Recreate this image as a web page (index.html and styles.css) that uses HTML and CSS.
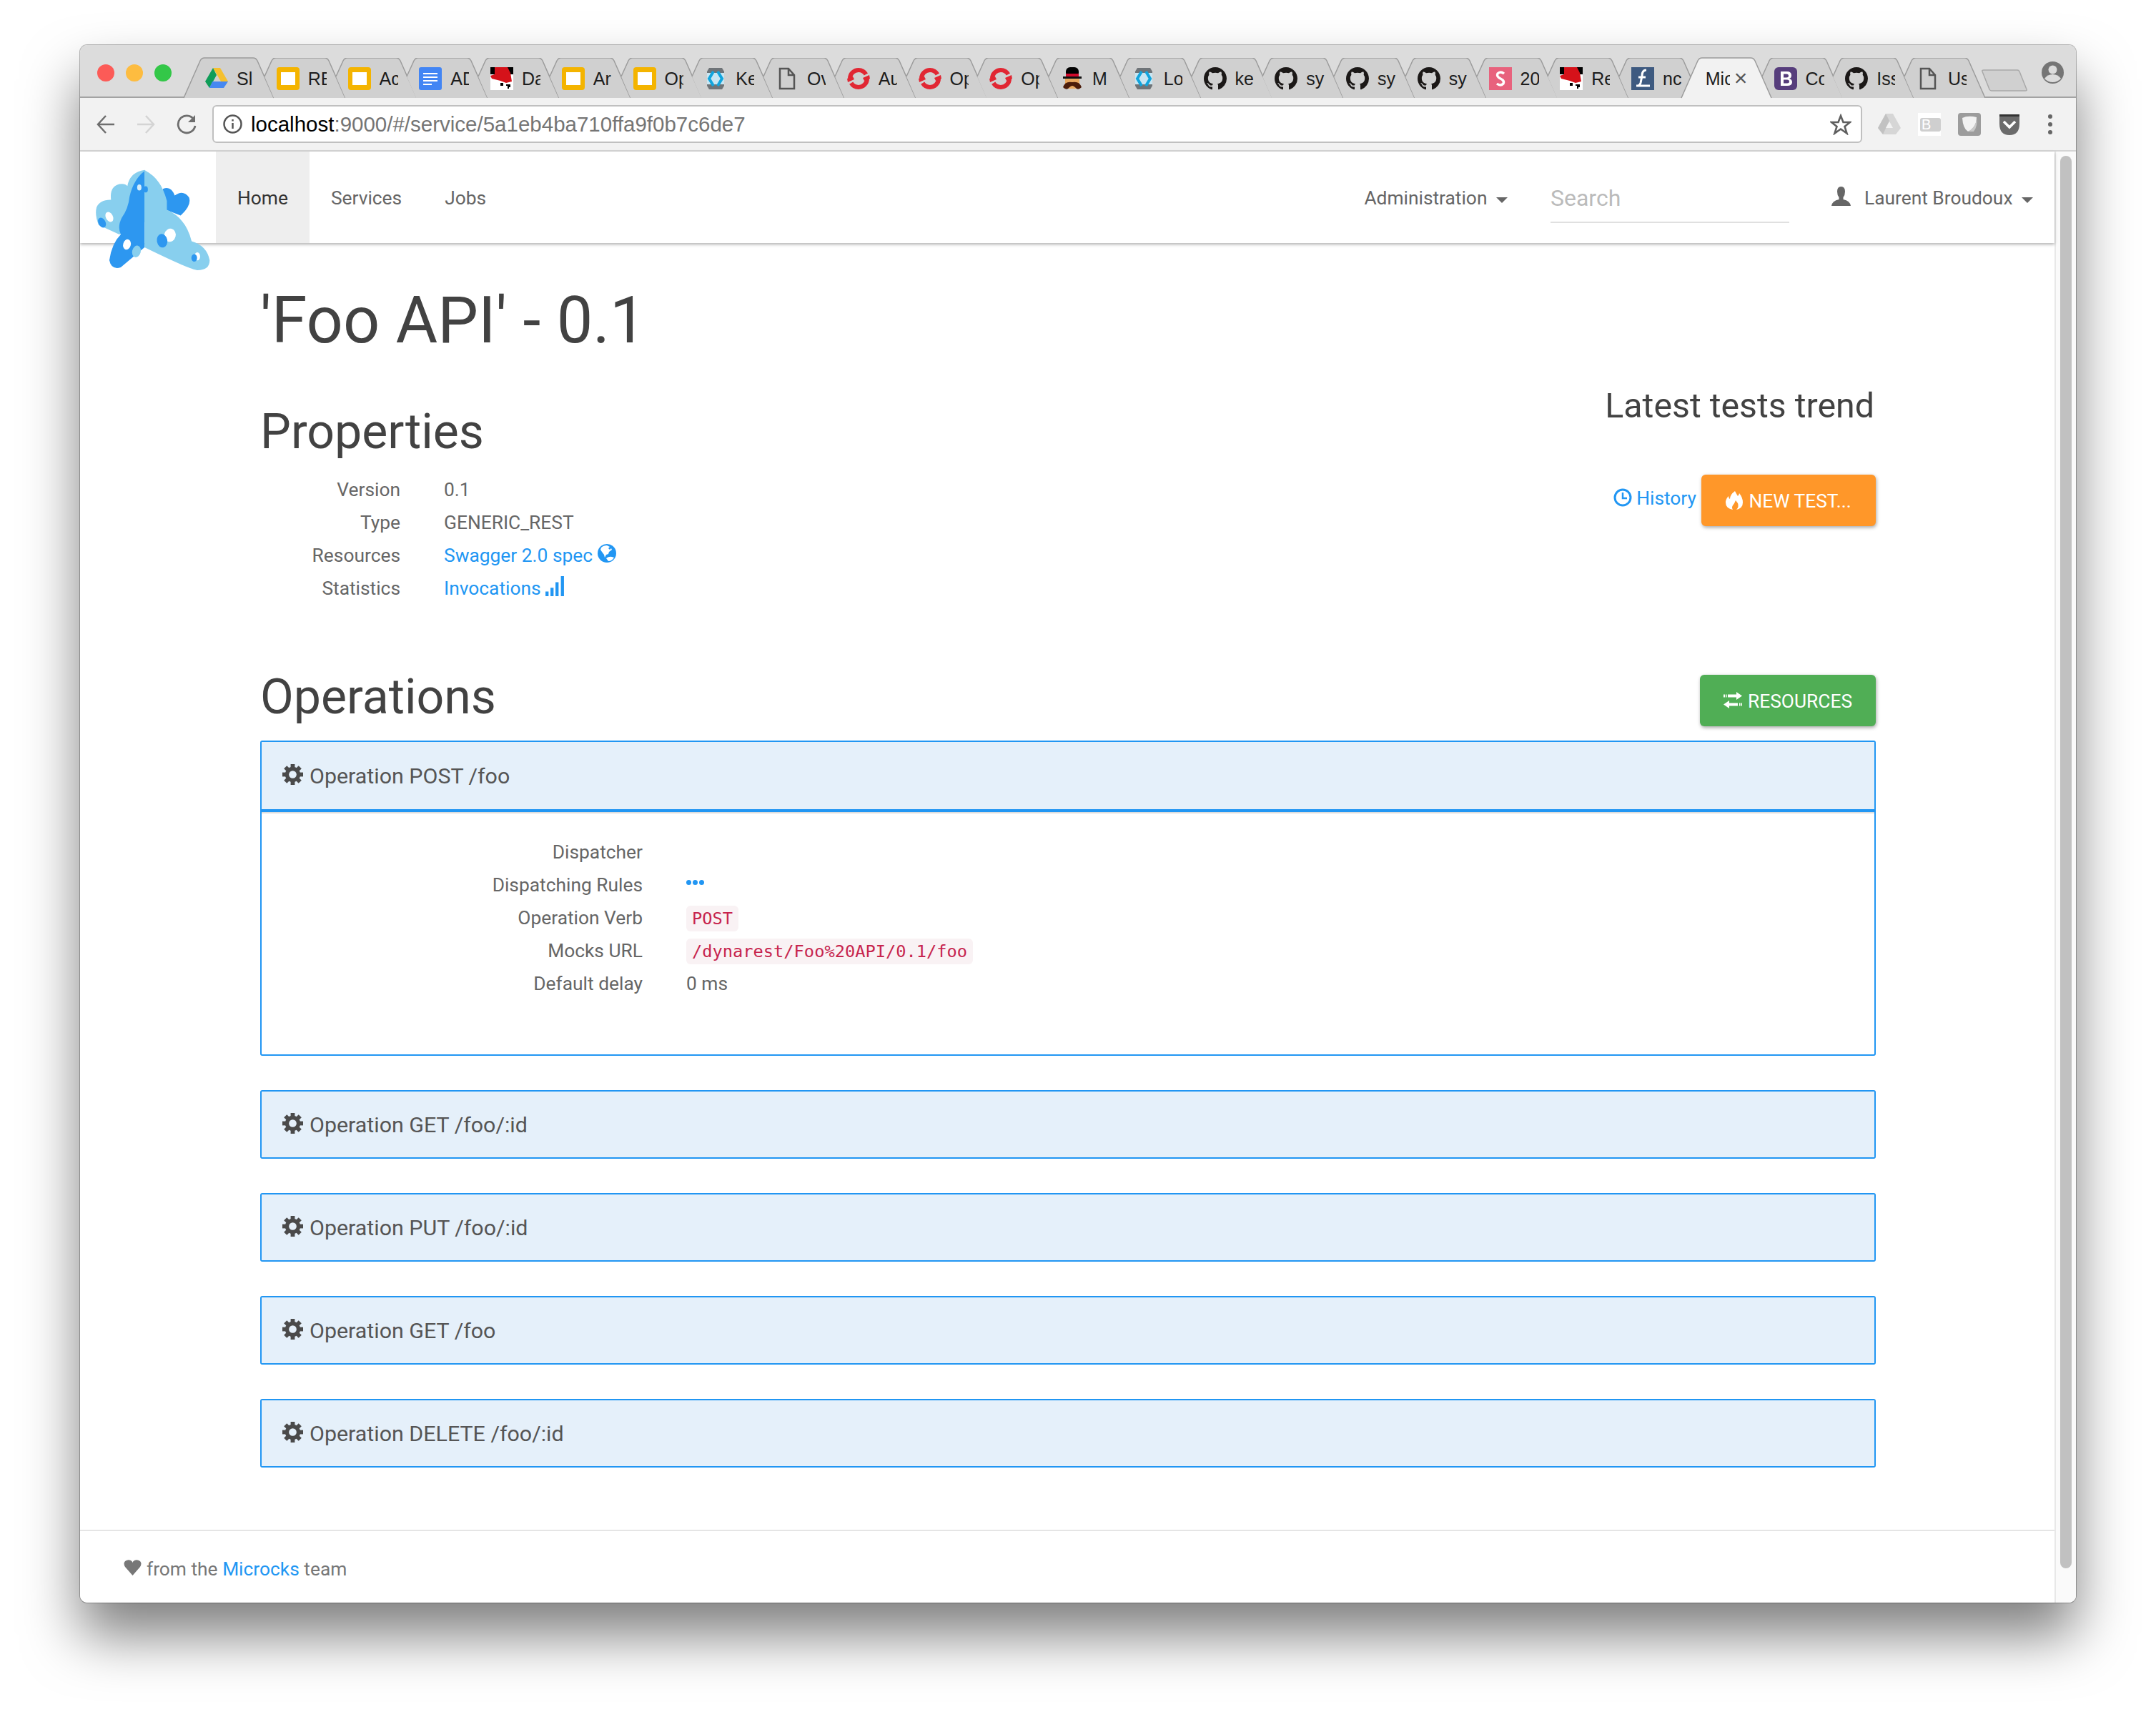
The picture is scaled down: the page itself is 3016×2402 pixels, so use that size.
FILE: index.html
```html
<!DOCTYPE html>
<html lang="en">
<head>
  <meta charset="UTF-8" />
  <title>Microcks</title>
  <link rel="stylesheet" href="styles.css">
</head>
<body>
  <!-- shared icons -->
  <svg class="defs" width="0" height="0">
    <symbol id="tab-shape" viewBox="0 0 126 56" preserveAspectRatio="none">
      <path class="tab-fill" d="M13 26 L23 4 Q25 0 29 0 H97 Q101 0 103 4 L126 56 H26 Z"/>
      <path class="tab-line" d="M13 26 L23 4 Q25 0 29 0 H97 Q101 0 103 4 L126 56"/>
    </symbol>
    <symbol id="fav-drive" viewBox="0 0 32 32">
      <path fill="#f5c02e" d="M11 1 H21 L32 20 H22 Z"/>
      <path fill="#0f9d58" d="M11 1 L16 11 L6 29 L0 20 Z"/>
      <path fill="#4688f1" d="M10 20 H32 L26 29 H6 Z"/>
    </symbol>
    <symbol id="fav-slides" viewBox="0 0 32 32">
      <rect x="0" y="0" width="32" height="32" rx="4" fill="#f4b400"/>
      <rect x="6" y="7" width="20" height="18" fill="#fff"/>
    </symbol>
    <symbol id="fav-docs" viewBox="0 0 32 32">
      <rect x="0" y="0" width="32" height="32" rx="3" fill="#4285f4"/>
      <path stroke="#fff" stroke-width="2" d="M6 9 H26 M6 14 H26 M6 19 H26 M6 24 H18"/>
    </symbol>
    <symbol id="fav-redhat" viewBox="0 0 32 32">
      <rect width="32" height="32" fill="#fff"/>
      <rect width="32" height="10" fill="#000"/>
      <path fill="#d5121a" d="M6 0 H24 L28 8 L30 20 L22 22 L14 19 L2 16 L0 12 L6 10 Z"/>
      <path fill="#000" d="M14 22 H18 V26 H14 Z M22 24 H28 V28 H26 V30 H24 V26 H22 Z"/>
    </symbol>
    <symbol id="fav-keycloak" viewBox="0 0 32 32">
      <path fill="#6f7478" d="M7 1 H25 L28 6 V26 L25 31 H7 L4 26 V6 Z"/>
      <path fill="#c9e6f2" d="M4 8 H28 V24 H4 Z"/>
      <path fill="none" stroke="#12a5dd" stroke-width="4" d="M13 6 L7 16 L13 26 M19 6 L25 16 L19 26"/>
    </symbol>
    <symbol id="fav-file" viewBox="0 0 32 32">
      <path fill="none" stroke="#555" stroke-width="2.500" d="M6 2 H18 L26 11 V30 H6 Z M18 2 V11 H26"/>
    </symbol>
    <symbol id="fav-openshift" viewBox="0 0 32 32">
      <circle cx="16" cy="16" r="12" fill="none" stroke="#e12733" stroke-width="6" stroke-dasharray="31 6.700"/>
      <path fill="#e12733" d="M1 21 L10 17 L8 13 L0 16 Z M31 11 L22 15 L24 19 L32 16 Z"/>
    </symbol>
    <symbol id="fav-hatman" viewBox="0 0 32 32">
      <rect x="7" y="0" width="18" height="14" rx="6" fill="#000"/>
      <rect x="7" y="9" width="18" height="5" fill="#d00a2b"/>
      <rect x="3" y="13" width="26" height="3" fill="#111"/>
      <rect x="6" y="16" width="20" height="14" fill="#e8a860"/>
      <path fill="#4b1c0a" d="M3 28 Q6 19 16 21 Q26 19 29 28 Q25 32 22 30 Q18 26 16 26 Q14 26 10 30 Q7 32 3 28 Z"/>
    </symbol>
    <symbol id="fav-github" viewBox="0 0 16 16">
      <path fill="#1b1817" d="M8 0C3.58 0 0 3.58 0 8c0 3.54 2.29 6.53 5.47 7.59.4.07.55-.17.55-.38 0-.19-.01-.82-.01-1.49-2.01.37-2.53-.49-2.69-.94-.09-.23-.48-.94-.82-1.13-.28-.15-.68-.52-.01-.53.63-.01 1.08.58 1.23.82.72 1.21 1.87.87 2.33.66.07-.52.28-.87.51-1.07-1.78-.2-3.64-.89-3.64-3.95 0-.87.31-1.59.82-2.15-.08-.2-.36-1.02.08-2.12 0 0 .67-.21 2.2.82.64-.18 1.32-.27 2-.27.68 0 1.36.09 2 .27 1.53-1.04 2.2-.82 2.2-.82.44 1.1.16 1.92.08 2.12.51.56.82 1.27.82 2.15 0 3.07-1.87 3.75-3.65 3.95.29.25.54.73.54 1.48 0 1.07-.01 1.93-.01 2.2 0 .21.15.46.55.38A8.013 8.013 0 0016 8c0-4.42-3.58-8-8-8z"/>
    </symbol>
    <symbol id="fav-pink" viewBox="0 0 32 32">
      <rect width="32" height="32" fill="#e8627d"/>
      <path fill="none" stroke="#fff" stroke-width="3.500" d="M21 9 Q16 5 12 9 Q10 13 16 16 Q22 19 20 23 Q16 27 11 23"/>
    </symbol>
    <symbol id="fav-ltx" viewBox="0 0 32 32">
      <rect width="32" height="32" fill="#3e5a80"/>
      <path fill="none" stroke="#fff" stroke-width="3" d="M21 4 Q15 4 15 12 L13 22 Q12 26 7 26 H26 M10 14 H20"/>
    </symbol>
    <symbol id="fav-bootstrap" viewBox="0 0 32 32">
      <rect width="32" height="32" rx="6" fill="#563d7c"/>
      <path fill="#fff" fill-rule="evenodd" d="M9 6 H18 Q24 6 24 11.500 Q24 15 21 16 Q25 17 25 21 Q25 26 18 26 H9 Z M13 9.500 V14.500 H17 Q20 14.500 20 12 Q20 9.500 17 9.500 Z M13 17.500 V22.500 H18 Q21 22.500 21 20 Q21 17.500 18 17.500 Z"/>
    </symbol>
    <symbol id="ic-cog" viewBox="0 0 30 30">
      <circle cx="15" cy="15" r="11"/>
      <rect x="12" y="0" width="6" height="7"/>
      <rect x="12" y="0" width="6" height="7" transform="rotate(45 15 15)"/>
      <rect x="12" y="0" width="6" height="7" transform="rotate(90 15 15)"/>
      <rect x="12" y="0" width="6" height="7" transform="rotate(135 15 15)"/>
      <rect x="12" y="0" width="6" height="7" transform="rotate(180 15 15)"/>
      <rect x="12" y="0" width="6" height="7" transform="rotate(225 15 15)"/>
      <rect x="12" y="0" width="6" height="7" transform="rotate(270 15 15)"/>
      <rect x="12" y="0" width="6" height="7" transform="rotate(315 15 15)"/>
      <circle cx="15" cy="15" r="5.500" fill="#e5f0fa"/>
    </symbol>
  </svg>

  <div class="window">
    <div class="tabstrip">
      <div class="lights">
        <span class="light light-red"></span>
        <span class="light light-yellow"></span>
        <span class="light light-green"></span>
      </div>
      <div class="tabs">
        <div class="tab tab-first"><svg class="tab-bg" viewBox="0 0 126 56" preserveAspectRatio="none"><path class="tab-fill" d="M0 56 L23 4 Q25 0 29 0 H97 Q101 0 103 4 L126 56 Z"/><path class="tab-line" d="M0 56 L23 4 Q25 0 29 0 H97 Q101 0 103 4 L126 56"/></svg><svg class="fav"><use href="#fav-drive"/></svg><span class="tab-title">Sl</span></div>
        <div class="tab"><svg class="tab-bg"><use href="#tab-shape"/></svg><svg class="fav"><use href="#fav-slides"/></svg><span class="tab-title">RE</span></div>
        <div class="tab"><svg class="tab-bg"><use href="#tab-shape"/></svg><svg class="fav"><use href="#fav-slides"/></svg><span class="tab-title">Ac</span></div>
        <div class="tab"><svg class="tab-bg"><use href="#tab-shape"/></svg><svg class="fav"><use href="#fav-docs"/></svg><span class="tab-title">AD</span></div>
        <div class="tab"><svg class="tab-bg"><use href="#tab-shape"/></svg><svg class="fav"><use href="#fav-redhat"/></svg><span class="tab-title">Da</span></div>
        <div class="tab"><svg class="tab-bg"><use href="#tab-shape"/></svg><svg class="fav"><use href="#fav-slides"/></svg><span class="tab-title">Ar</span></div>
        <div class="tab"><svg class="tab-bg"><use href="#tab-shape"/></svg><svg class="fav"><use href="#fav-slides"/></svg><span class="tab-title">Op</span></div>
        <div class="tab"><svg class="tab-bg"><use href="#tab-shape"/></svg><svg class="fav"><use href="#fav-keycloak"/></svg><span class="tab-title">Ke</span></div>
        <div class="tab"><svg class="tab-bg"><use href="#tab-shape"/></svg><svg class="fav"><use href="#fav-file"/></svg><span class="tab-title">Ov</span></div>
        <div class="tab"><svg class="tab-bg"><use href="#tab-shape"/></svg><svg class="fav"><use href="#fav-openshift"/></svg><span class="tab-title">Au</span></div>
        <div class="tab"><svg class="tab-bg"><use href="#tab-shape"/></svg><svg class="fav"><use href="#fav-openshift"/></svg><span class="tab-title">Op</span></div>
        <div class="tab"><svg class="tab-bg"><use href="#tab-shape"/></svg><svg class="fav"><use href="#fav-openshift"/></svg><span class="tab-title">Op</span></div>
        <div class="tab"><svg class="tab-bg"><use href="#tab-shape"/></svg><svg class="fav"><use href="#fav-hatman"/></svg><span class="tab-title">M</span></div>
        <div class="tab"><svg class="tab-bg"><use href="#tab-shape"/></svg><svg class="fav"><use href="#fav-keycloak"/></svg><span class="tab-title">Lo</span></div>
        <div class="tab"><svg class="tab-bg"><use href="#tab-shape"/></svg><svg class="fav"><use href="#fav-github"/></svg><span class="tab-title">ke</span></div>
        <div class="tab"><svg class="tab-bg"><use href="#tab-shape"/></svg><svg class="fav"><use href="#fav-github"/></svg><span class="tab-title">sy</span></div>
        <div class="tab"><svg class="tab-bg"><use href="#tab-shape"/></svg><svg class="fav"><use href="#fav-github"/></svg><span class="tab-title">sy</span></div>
        <div class="tab"><svg class="tab-bg"><use href="#tab-shape"/></svg><svg class="fav"><use href="#fav-github"/></svg><span class="tab-title">sy</span></div>
        <div class="tab"><svg class="tab-bg"><use href="#tab-shape"/></svg><svg class="fav"><use href="#fav-pink"/></svg><span class="tab-title">20</span></div>
        <div class="tab"><svg class="tab-bg"><use href="#tab-shape"/></svg><svg class="fav"><use href="#fav-redhat"/></svg><span class="tab-title">Re</span></div>
        <div class="tab"><svg class="tab-bg"><use href="#tab-shape"/></svg><svg class="fav"><use href="#fav-ltx"/></svg><span class="tab-title">nc</span></div>
        <div class="tab tab-active"><svg class="tab-bg" viewBox="0 0 126 56" preserveAspectRatio="none"><path class="tab-fill" d="M0 56 L23 4 Q25 0 29 0 H97 Q101 0 103 4 L126 56 Z"/><path class="tab-line" d="M0 56 L23 4 Q25 0 29 0 H97 Q101 0 103 4 L126 56"/></svg><span class="tab-title">Mic</span><span class="tab-close">×</span></div>
        <div class="tab"><svg class="tab-bg"><use href="#tab-shape"/></svg><svg class="fav"><use href="#fav-bootstrap"/></svg><span class="tab-title">Co</span></div>
        <div class="tab"><svg class="tab-bg"><use href="#tab-shape"/></svg><svg class="fav"><use href="#fav-github"/></svg><span class="tab-title">Iss</span></div>
        <div class="tab"><svg class="tab-bg"><use href="#tab-shape"/></svg><svg class="fav"><use href="#fav-file"/></svg><span class="tab-title">Us</span></div>
      </div>
      <svg class="newtab" viewBox="0 0 64 31"><path d="M3 1 H50 Q52 1 53 3 L63 28 Q64 30 61 30 H14 Q12 30 11 28 L1 3 Q0 1 3 1 Z"/></svg>
      <svg class="profile" viewBox="0 0 31 31">
        <circle cx="15.500" cy="15.500" r="15.500" fill="#757575"/>
        <circle cx="15.500" cy="11.500" r="6" fill="#dcdcdc"/>
        <path fill="#dcdcdc" d="M4 24 Q8 18 15.500 18 Q23 18 27 24 Q22 29 15.500 29 Q9 29 4 24 Z"/>
      </svg>
    </div>

    <div class="toolbar">
      <svg class="tool-icon" viewBox="0 0 26 26"><path fill="none" stroke="#6e6e6e" stroke-width="2.500" d="M25 13 H2 M13 1 L2 13 L13 25"/></svg>
      <svg class="tool-icon" viewBox="0 0 26 26"><path fill="none" stroke="#d4d4d4" stroke-width="2.500" d="M1 13 H24 M13 1 L24 13 L13 25"/></svg>
      <svg class="tool-icon tool-reload" viewBox="0 0 28 28"><path fill="none" stroke="#6e6e6e" stroke-width="2.800" d="M24 7 A12 12 0 1 0 26 16"/><path fill="#6e6e6e" d="M26 1 V11 H16 Z"/></svg>
      <div class="addressbar">
        <svg class="info-icon" viewBox="0 0 27 27"><circle cx="13.500" cy="13.500" r="12" fill="none" stroke="#555" stroke-width="2.500"/><path stroke="#555" stroke-width="2.500" d="M13.500 12 V20 M13.500 7 V9.500"/></svg>
        <span class="url"><span class="url-host">localhost</span>:9000/#/service/5a1eb4ba710ffa9f0b7c6de7</span>
        <svg class="star" viewBox="0 0 30 30"><path fill="none" stroke="#5f5f5f" stroke-width="2.600" d="M15 3 L18.500 12 H28 L20.500 18 L23.500 27.500 L15 21.500 L6.500 27.500 L9.500 18 L2 12 H11.500 Z"/></svg>
      </div>
      <div class="extensions">
        <svg class="ext" viewBox="0 0 32 32"><path fill="#d6d6d6" d="M11 1 H21 L32 21 L25 30 H7 L0 21 Z"/><path fill="#c2c2c2" d="M11 1 L16 11 L7 30 L0 21 Z"/><path fill="#f2f2f2" d="M16 12 L21 21 H11 Z"/></svg>
        <svg class="ext" viewBox="0 0 32 32"><rect width="32" height="32" fill="#fff"/><rect x="3" y="7" width="29" height="19" rx="3" fill="#cfcfcf"/><text class="ext-b" x="5" y="23">B</text></svg>
        <svg class="ext" viewBox="0 0 32 32"><rect width="32" height="32" rx="4" fill="#9c9c9c"/><path fill="#f2f2f2" d="M6 7 Q14 3 26 6 Q26 20 14 26 Q7 22 6 7 Z"/><path fill="#c8c8c8" d="M26 6 Q26 20 14 26 L22 26 Q28 18 26 6 Z"/></svg>
        <svg class="ext" viewBox="0 0 32 32"><path fill="#6b6b6b" d="M2 2 H30 V15 Q30 31 16 31 Q2 31 2 15 Z"/><path fill="#333" d="M2 2 H30 V5 H2 Z"/><path fill="none" stroke="#fff" stroke-width="3.500" d="M8 12 L16 20 L24 12"/></svg>
      </div>
      <div class="menu-dots"><span></span><span></span><span></span></div>
    </div>

    <div class="viewport">
      <div class="page">
        <div class="navbar">
          <div class="brand">
            <svg class="logo" viewBox="70 105 484 430">
              <path fill="#88cfee" d="M172 382 L85 342 Q68 300 76 268 Q90 235 137 236 Q130 180 172 170 Q195 165 206 178 Q215 120 278 110 L300 125 L280 330 Z"/>
              <path fill="#2d97f0" d="M355 190 Q390 175 405 218 Q440 192 465 225 Q478 258 430 302 L360 275 Z"/>
              <path fill="#2d97f0" d="M278 115 Q232 150 215 222 Q210 272 182 312 Q163 350 178 382 Q140 420 130 490 Q138 532 178 520 L278 436 Z"/>
              <path fill="#88cfee" d="M278 113 Q345 140 372 240 L372 278 Q452 312 476 410 Q540 428 552 490 Q552 532 500 532 Q470 530 278 436 Z"/>
              <ellipse cx="130" cy="308" rx="15" ry="22" transform="rotate(-28 130 308)" fill="#fff"/>
              <ellipse cx="99" cy="332" rx="15" ry="22" transform="rotate(-28 99 332)" fill="#2d97f0"/>
              <ellipse cx="204" cy="424" rx="16" ry="22" transform="rotate(15 204 424)" fill="#fff"/>
              <ellipse cx="244" cy="453" rx="18" ry="25" transform="rotate(15 244 453)" fill="#88cfee"/>
              <ellipse cx="385" cy="385" rx="24" ry="28" transform="rotate(15 385 385)" fill="#fff"/>
              <ellipse cx="352" cy="408" rx="22" ry="29" transform="rotate(-10 352 408)" fill="#2d97f0"/>
              <ellipse cx="256" cy="184" rx="9" ry="13" fill="#d9eefa"/>
              <ellipse cx="283" cy="192" rx="9" ry="13" fill="#2d97f0"/>
              <ellipse cx="500" cy="474" rx="12" ry="17" fill="#fff"/>
              <ellipse cx="487" cy="480" rx="12" ry="16" fill="#2d97f0"/>
            </svg>
          </div>
          <a class="nav-link nav-active">Home</a>
          <a class="nav-link">Services</a>
          <a class="nav-link">Jobs</a>
          <div class="nav-right">
            <a class="nav-item">Administration <span class="caret"></span></a>
            <div class="search">Search</div>
            <svg class="user-icon" viewBox="0 0 27 27"><path fill="#666" d="M13.500 0 Q19 0 19 7 Q19 12 16.500 15 V18 Q26 20 27 27 H0 Q1 20 10.500 18 V15 Q8 12 8 7 Q8 0 13.500 0 Z"/></svg>
            <a class="nav-item">Laurent Broudoux <span class="caret"></span></a>
          </div>
        </div>

        <div class="main">
          <div class="top-row">
            <div>
              <h1>'Foo API' - 0.1</h1>
              <h2 class="props-title">Properties</h2>
              <div class="props">
                <div class="label">Version</div><div>0.1</div>
                <div class="label">Type</div><div>GENERIC_REST</div>
                <div class="label">Resources</div>
                <div><a class="link">Swagger 2.0 spec <svg class="icon-globe" viewBox="0 0 26 26"><circle cx="13" cy="13" r="13" fill="#2196f3"/><path fill="#fff" d="M5 5 Q8 2 13 2 L17 4 L15 6 L17 8 L19 6 L20 8 L16 11 L15 14 L12 15 L10 19 L9 15 L6 11 L4 8 Z M12 20 Q16 17 20 18 L23 19 Q20 24 15 24 Z"/></svg></a></div>
                <div class="label">Statistics</div>
                <div><a class="link">Invocations <svg class="icon-bars" viewBox="0 0 24 26"><path fill="#2196f3" d="M0 20 H4 V26 H0 Z M6.500 15 H10.500 V26 H6.500 Z M13 8 H17 V26 H13 Z M20 0 H24 V26 H20 Z"/></svg></a></div>
              </div>
            </div>
            <div class="trend">
              <h3>Latest tests trend</h3>
              <div class="trend-actions">
                <a class="link history"><svg class="icon-clock" viewBox="0 0 26 26"><circle cx="13" cy="13" r="11" fill="none" stroke="#2196f3" stroke-width="3"/><path fill="none" stroke="#2196f3" stroke-width="2.500" d="M13 6 V14 H19"/></svg> History</a>
                <a class="btn btn-orange"><svg class="icon-flame" viewBox="0 0 24 26"><path fill="#fff" d="M13 0 Q15 4 17 7 Q19 5 19 3 Q24 9 24 16 Q24 24 15 26 Q19 22 17 17 L14 13 Q12 18 10 20 Q8 23 10 26 Q0 24 0 16 Q0 11 4 7 Q4 10 6 11 Q6 5 13 0 Z"/></svg> NEW TEST...</a>
              </div>
            </div>
          </div>

          <div class="ops-head">
            <h2>Operations</h2>
            <a class="btn btn-green"><svg class="icon-exchange" viewBox="0 0 26 24"><path fill="#fff" d="M26 5.500 L18 0 V3.500 H6 V7.500 H18 V11 Z M0 17.500 L8 12 V15.500 H20 V19.500 H8 V23 Z M0 3.500 H2 V7.500 H0 Z M3 3.500 H4.500 V7.500 H3 Z M22 15.500 H23.500 V19.500 H22 Z M24.500 15.500 H26 V19.500 H24.500 Z"/></svg> RESOURCES</a>
          </div>

          <div class="panel">
            <div class="panel-head panel-head-open"><svg class="icon-cog"><use href="#ic-cog"/></svg>Operation POST /foo</div>
            <div class="panel-body">
              <div class="details">
                <div class="label">Dispatcher</div><div></div>
                <div class="label">Dispatching Rules</div><div><a class="rule-dots"><span></span><span></span><span></span></a></div>
                <div class="label">Operation Verb</div><div><code>POST</code></div>
                <div class="label">Mocks URL</div><div><code>/dynarest/Foo%20API/0.1/foo</code></div>
                <div class="label">Default delay</div><div>0 ms</div>
              </div>
            </div>
          </div>
          <div class="panel"><div class="panel-head"><svg class="icon-cog"><use href="#ic-cog"/></svg>Operation GET /foo/:id</div></div>
          <div class="panel"><div class="panel-head"><svg class="icon-cog"><use href="#ic-cog"/></svg>Operation PUT /foo/:id</div></div>
          <div class="panel"><div class="panel-head"><svg class="icon-cog"><use href="#ic-cog"/></svg>Operation GET /foo</div></div>
          <div class="panel"><div class="panel-head"><svg class="icon-cog"><use href="#ic-cog"/></svg>Operation DELETE /foo/:id</div></div>
        </div>

        <div class="footer">
          <svg class="icon-heart" viewBox="0 0 25 22"><path fill="#777" d="M12.500 22 L2 10 Q-1 5 2 2 Q6 -1 10 1 Q12 2 12.500 4 Q13 2 15 1 Q19 -1 23 2 Q26 5 23 10 Z"/></svg>
          <span>from the <a class="link">Microcks</a> team</span>
        </div>
      </div>
      <div class="scrollbar"><div class="thumb"></div></div>
    </div>
  </div>
</body>
</html>
```
FILE: styles.css
```css
html, body {
  margin: 0;
  height: 2402px;
  overflow: hidden;
}
body {
  background: #fff;
  padding: 63px 0 0 112px;
  box-sizing: border-box;
  font-family: Roboto, sans-serif;
  font-size: 26.350px;
  color: #666;
}
.defs {
  display: block;
  height: 0;
}
a {
  text-decoration: none;
}

/* browser window */
.window {
  width: 2792px;
  height: 2179px;
  display: flex;
  flex-direction: column;
  border-radius: 10px;
  overflow: hidden;
  box-shadow: 0 0 0 1px rgba(0, 0, 0, 0.28), 0 46px 78px rgba(0, 0, 0, 0.5);
}
.tabstrip {
  position: relative;
  height: 74px;
  flex: none;
  display: flex;
  background: #dcdcdc;
  border-bottom: 2px solid #a3a3a3;
  box-sizing: border-box;
}
.lights {
  display: flex;
  gap: 16px;
  padding: 27px 17px 0 24px;
}
.light {
  width: 24px;
  height: 24px;
  border-radius: 50%;
}
.light-red { background: #fc5b57; }
.light-yellow { background: #fdbc40; }
.light-green { background: #33c748; }
.tabs {
  display: flex;
  align-self: flex-end;
  margin-bottom: -2px;
}
.tab {
  position: relative;
  flex: none;
  width: 126px;
  height: 56px;
  margin-right: -26.250px;
  font-family: "Liberation Sans", sans-serif;
  font-size: 25px;
  color: #1c1c1c;
}
.tab-bg {
  position: absolute;
  left: 0;
  top: 0;
  width: 126px;
  height: 56px;
  overflow: visible;
}
.tab-fill { fill: #d0d0d0; }
.tab-line {
  fill: none;
  stroke: #9b9b9b;
  stroke-width: 1.500;
}
.fav {
  position: absolute;
  left: 30px;
  top: 13px;
  width: 32px;
  height: 32px;
}
.tab-title {
  position: absolute;
  left: 74px;
  top: 15px;
  width: 26px;
  overflow: hidden;
  white-space: nowrap;
  line-height: 29px;
}
.tab-active {
  z-index: 1;
}
.tab-active .tab-fill { fill: #f2f2f2; }
.tab-active .tab-title {
  left: 34px;
  width: 34px;
}
.tab-close {
  position: absolute;
  left: 74px;
  top: 12px;
  line-height: 32px;
  font-size: 32px;
  color: #555;
}
.newtab {
  flex: none;
  width: 64px;
  height: 31px;
  margin: 34px 0 0 21px;
}
.newtab path {
  fill: #d0d0d0;
  stroke: #a8a8a8;
  stroke-width: 1.500;
}
.profile {
  flex: none;
  width: 31px;
  height: 31px;
  margin: 23px 0 0 20px;
}
.toolbar {
  height: 75px;
  flex: none;
  display: flex;
  align-items: center;
  gap: 30px;
  padding: 0 0 0 23px;
  background: #f2f2f2;
  border-bottom: 2px solid #d4d4d4;
  box-sizing: border-box;
}
.tool-icon {
  flex: none;
  width: 26px;
  height: 26px;
}
.tool-reload {
  width: 28px;
  height: 28px;
}
.addressbar {
  width: 2308px;
  height: 53px;
  margin-left: -8px;
  flex: none;
  display: flex;
  align-items: center;
  box-sizing: border-box;
  padding: 0 13px;
  background: #fff;
  border: 2px solid #c0c0c0;
  border-radius: 6px;
  font-family: "Liberation Sans", sans-serif;
  font-size: 29.500px;
  color: #757575;
}
.info-icon {
  width: 27px;
  height: 27px;
  margin-right: 12px;
}
.url-host {
  color: #000;
}
.star {
  width: 30px;
  height: 30px;
  margin-left: auto;
}
.extensions {
  display: flex;
  gap: 24px;
  margin-left: -8px;
}
.ext {
  width: 32px;
  height: 32px;
}
.ext-b {
  font-family: "Liberation Sans", sans-serif;
  font-size: 20px;
  fill: #fff;
}
.menu-dots {
  display: flex;
  flex-direction: column;
  gap: 5px;
  margin-left: 8px;
}
.menu-dots span {
  width: 6px;
  height: 6px;
  border-radius: 50%;
  background: #666;
}

/* page in the window */
.viewport {
  flex: 1;
  min-height: 0;
  display: flex;
  background: #fff;
}
.page {
  width: 2762px;
  display: flex;
  flex-direction: column;
}
.scrollbar {
  width: 30px;
  box-sizing: border-box;
  background: #fafafa;
  border-left: 2px solid #e8e8e8;
  padding: 6px 0 0 6px;
}
.thumb {
  width: 16px;
  height: 1976px;
  border-radius: 8px;
  background: #c1c1c1;
}
.navbar {
  position: relative;
  z-index: 2;
  height: 128px;
  flex: none;
  display: flex;
  align-items: center;
  background: #fff;
  box-shadow: 0 2px 4px rgba(0, 0, 0, 0.3);
}
.brand {
  position: relative;
  width: 190px;
  height: 128px;
  flex: none;
}
.logo {
  position: absolute;
  left: 21px;
  top: 24px;
  width: 161px;
  height: 143px;
}
.nav-link {
  height: 128px;
  line-height: 130px;
  padding: 0 30px;
}
.nav-active {
  background: #eee;
  color: #333;
}
.nav-right {
  margin-left: auto;
  padding-right: 30px;
  display: flex;
  align-items: center;
}
.nav-item {
  white-space: nowrap;
  padding-top: 2px;
}
.caret {
  display: inline-block;
  margin-left: 6px;
  vertical-align: 2px;
  border-top: 8px solid #666;
  border-left: 8px solid transparent;
  border-right: 8px solid transparent;
}
.search {
  width: 334px;
  height: 72px;
  margin: 0 59px 0 60px;
  box-sizing: border-box;
  border-bottom: 2px solid #e0e0e0;
  font-size: 32px;
  line-height: 74px;
  color: #bbb;
}
.user-icon {
  width: 27px;
  height: 27px;
  margin: -4px 19px 0 0;
}

.main {
  padding: 0 250px 0 252px;
  color: #666;
}
.top-row {
  display: flex;
  justify-content: space-between;
}
h1, h2, h3 {
  margin: 0;
  font-weight: 400;
  color: #424242;
}
h1 {
  font-size: 90px;
  line-height: 100px;
  margin-top: 59px;
}
h2 {
  font-size: 68px;
  line-height: 76px;
}
.props-title {
  margin: 67px 0 20px;
}
.props {
  display: grid;
  grid-template-columns: 196px 1fr;
  column-gap: 61px;
  grid-auto-rows: 46px;
  line-height: 46px;
}
.label {
  text-align: right;
}
.link {
  color: #2196f3;
}
.icon-globe {
  width: 26px;
  height: 26px;
  vertical-align: -1px;
}
.icon-bars {
  width: 26px;
  height: 28px;
  vertical-align: -2px;
}
.trend {
  display: flex;
  flex-direction: column;
  align-items: flex-end;
  padding-top: 200px;
}
.trend h3 {
  font-size: 48.300px;
  line-height: 56px;
  margin-right: 2px;
}
.trend-actions {
  display: flex;
  margin-top: 68px;
  gap: 7px;
}
.history {
  margin-top: 15px;
  line-height: 36px;
}
.icon-clock {
  width: 26px;
  height: 26px;
  vertical-align: -3px;
}
.btn {
  display: flex;
  align-items: center;
  justify-content: center;
  gap: 8px;
  height: 72px;
  box-sizing: border-box;
  border-radius: 6px;
  padding-top: 2px;
  color: #fff;
  box-shadow: 1px 2px 5px rgba(0, 0, 0, 0.35);
}
.btn-orange {
  width: 244px;
  background: #ff9729;
}
.btn-green {
  width: 246px;
  background: #50ae55;
  margin-top: 7px;
}
.icon-flame {
  width: 24px;
  height: 26px;
  margin-top: -3px;
}
.icon-exchange {
  width: 26px;
  height: 24px;
  margin-top: -2px;
}
.ops-head {
  display: flex;
  justify-content: space-between;
  margin: 91px 0 20px;
}

.panel {
  margin-bottom: 48px;
  border: 2px solid #2196f3;
  border-radius: 3px;
}
.panel-head {
  height: 92px;
  display: flex;
  align-items: center;
  padding-left: 29px;
  background: #e5f0fa;
  font-size: 30.400px;
  color: #555;
}
.panel-head-open {
  height: 98px;
  box-sizing: border-box;
  border-bottom: 4px solid #2196f3;
}
.icon-cog {
  width: 29px;
  height: 29px;
  margin: -4px 9px 0 0;
  fill: #4a4a4a;
}
.panel-body {
  border-top: 2px solid #ddd;
  padding: 31px 0 76px;
}
.details {
  display: grid;
  grid-template-columns: 533px 1fr;
  column-gap: 61px;
  grid-auto-rows: 46px;
  line-height: 46px;
}
code {
  display: inline-block;
  height: 36px;
  line-height: 36px;
  padding: 0 8px;
  border-radius: 6px;
  background: #f9f2f4;
  color: #c7254e;
  font-family: "DejaVu Sans Mono", monospace;
  font-size: 23.700px;
}
.rule-dots {
  display: flex;
  gap: 2px;
  padding-top: 16px;
}
.rule-dots span {
  width: 7px;
  height: 7px;
  border-radius: 50%;
  background: #2196f3;
}

.footer {
  height: 102px;
  flex: none;
  margin-top: auto;
  box-sizing: border-box;
  display: flex;
  align-items: center;
  gap: 7px;
  padding: 6px 0 0 61px;
  border-top: 2px solid #e5e5e5;
  color: #777;
}
.icon-heart {
  width: 25px;
  height: 22px;
  margin-top: -4px;
}
```
